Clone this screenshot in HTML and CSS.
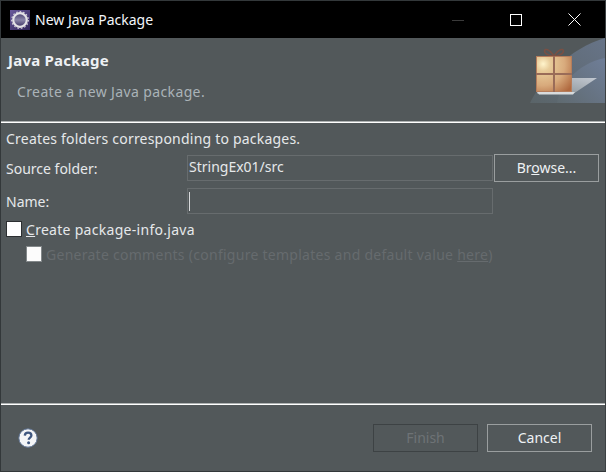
FILE: index.html
```html
<!DOCTYPE html>
<html lang="en">
<head>
<meta charset="utf-8">
<title>New Java Package</title>
<link rel="stylesheet" href="styles.css">
</head>
<body>
<div class="window">
  <header class="titlebar">
    <svg class="app-icon" viewBox="0 0 20 20" width="20" height="20" aria-hidden="true">
      <defs>
        <linearGradient id="appbg" x1="0" y1="0" x2="1" y2="1"><stop offset="0" stop-color="#6a5a9c"/><stop offset="1" stop-color="#2f2358"/></linearGradient>
        <linearGradient id="appcore" x1="0" y1="0" x2="0" y2="1"><stop offset="0" stop-color="#4a4170"/><stop offset="0.5" stop-color="#8a85a8"/><stop offset="1" stop-color="#3a3060"/></linearGradient>
      </defs>
      <rect width="20" height="20" fill="url(#appbg)"/>
      <circle cx="10" cy="10" r="6.800" fill="url(#appcore)" stroke="#e4e2e6" stroke-width="2.200"/>
      <circle cx="10" cy="10" r="8.300" fill="none" stroke="#d8d6dc" stroke-width="1.200" stroke-dasharray="1.600 1.900"/>
    </svg>
    <span class="title-text">New Java Package</span>
    <div class="win-controls">
      <span class="win-btn"><svg width="12" height="12" viewBox="0 0 12 12"><path d="M0 6.5h12" stroke="#3a3a3a" fill="none"/></svg></span>
      <span class="win-btn"><svg width="12" height="12" viewBox="0 0 12 12"><rect x=".5" y=".5" width="11" height="11" stroke="#fff" fill="none"/></svg></span>
      <span class="win-btn"><svg width="13" height="13" viewBox="0 0 13 13"><path d="M.5.5l12 12M12.500.5l-12 12" stroke="#fff" fill="none"/></svg></span>
    </div>
  </header>

  <section class="banner">
    <div class="banner-text">
      <h1 class="banner-title">Java Package</h1>
      <p class="banner-sub">Create a new Java package.</p>
    </div>
    <svg class="banner-art" viewBox="0 0 76 66" width="76" height="66" aria-hidden="true">
      <defs>
        <radialGradient id="box" cx="0.2" cy="0.22" r="1"><stop offset="0" stop-color="#fff4cc"/><stop offset="0.2" stop-color="#e8cc9a"/><stop offset="0.6" stop-color="#d8aa7c"/><stop offset="1" stop-color="#b0693f"/></radialGradient>
        <linearGradient id="swoosh" x1="0" y1="1" x2="1" y2="0"><stop offset="0" stop-color="#5a6468"/><stop offset="1" stop-color="#677488"/></linearGradient>
        <linearGradient id="band" x1="0" y1="1" x2="1" y2="0"><stop offset="0" stop-color="#5f6a70"/><stop offset="1" stop-color="#6f7e98"/></linearGradient>
        <linearGradient id="floor" x1="0" y1="1" x2="1" y2="0"><stop offset="0" stop-color="#80898d"/><stop offset="1" stop-color="#c3c9d2"/></linearGradient>
      </defs>
      <path d="M1 65C12 42 40 10 76 0V65Z" fill="url(#swoosh)"/>
      <path d="M28 65C30 50 46 26 76 20V65Z" fill="url(#band)"/>
      <path d="M8 40H68L44 56H8Z" fill="url(#floor)"/>
      <path d="M8 54H46L44 56.500H10Z" fill="#d8dbdd"/>
      <path d="M25 18C20 11 16 10 15.500 13C15.500 16 21 18 25 18C29 18 34.500 16 34.500 13C34 10 30 11 25 18Z" fill="none" stroke="#7a5044" stroke-width="1.500"/>
      <rect x="7" y="18" width="36" height="36" fill="url(#box)"/>
      <rect x="7.500" y="18.500" width="35" height="35" fill="none" stroke="#b57d5c"/>
      <path d="M25 18V54M7 36H43" stroke="#9a6c58" stroke-width="2" fill="none"/>
    </svg>
  </section>
  <hr class="rule">

  <main class="content">
    <p class="intro">Creates folders corresponding to packages.</p>
    <div class="form-grid">
      <label class="field-label">Source folder:</label>
      <div class="field field-value">StringEx01/src</div>
      <button class="btn browse" type="button">Br<u>o</u>wse...</button>
      <label class="field-label name-label">Name:</label>
      <div class="field"><span class="caret"></span></div>
    </div>
    <div class="check-row">
      <span class="checkbox"></span>
      <span class="check-text"><u>C</u>reate package-info.java</span>
    </div>
    <div class="check-row sub disabled">
      <span class="checkbox no-border"></span>
      <span class="check-text">Generate comments (configure templates and default value <u>here</u>)</span>
    </div>
  </main>

  <hr class="rule">
  <footer class="footer">
    <svg class="help" viewBox="0 0 20 20" width="20" height="20" aria-hidden="true">
      <circle cx="10" cy="10" r="9.200" fill="#f4f5f7" stroke="#5e7394" stroke-width="1"/>
      <path d="M6.800 7.600C6.900 5.600 8.300 4.600 10.100 4.600C12 4.600 13.400 5.700 13.400 7.400C13.400 9.500 10.700 9.800 10.700 11.800" fill="none" stroke="#3f5780" stroke-width="2.300"/>
      <circle cx="10.600" cy="14.800" r="1.500" fill="#3f5780"/>
    </svg>
    <button class="btn btn-disabled" type="button" disabled>Finish</button>
    <button class="btn" type="button">Cancel</button>
  </footer>
</div>
</body>
</html>
```

FILE: styles.css
```css
* { box-sizing: border-box; }
html, body { margin: 0; padding: 0; }
body { width: 606px; height: 472px; overflow: hidden; background: #52585a; }
.window {
  width: 606px; height: 472px;
  display: flex; flex-direction: column;
  background: #52585a;
  border: 1px solid #33383a;
  border-right-color: #3c4143;
  font-family: "Noto Sans", "Open Sans", sans-serif;
  font-size: 14px;
  color: #e6e8ea;
}
.titlebar {
  height: 37px; flex: none;
  display: flex; align-items: center;
  background: #000; color: #f2f6fa;
  padding-left: 9px;
}
.app-icon { flex: none; margin-right: 5px; }
.title-text { font-size: 14px; line-height: 20px; }
.win-controls { margin-left: auto; display: flex; padding-right: 2px; }
.win-btn { width: 58px; height: 36px; display: flex; align-items: center; justify-content: center; }
.banner { height: 83px; flex: none; display: flex; justify-content: space-between; padding-left: 7px; }
.banner-title { margin: 12px 0 0; font-size: 15px; line-height: 20px; font-weight: 700; color: #eef1f4; letter-spacing: 0.22px; }
.banner-sub { margin: 12px 0 0 9px; font-size: 14px; line-height: 20px; color: #aab3b8; letter-spacing: 0.38px; }
.banner-art { flex: none; }
.rule { flex: none; margin: 0; border: 0; height: 2px; background: linear-gradient(#aeb2b2 50%, #fff 50%); }
.content { flex: 1; padding: 6px 5px 0; }
.intro { margin: 0 0 6px; line-height: 20px; letter-spacing: 0.21px; }
.form-grid { display: grid; grid-template-columns: 181px 306px 105px; grid-auto-rows: 26px; row-gap: 7px; align-items: center; }
.field-label { line-height: 20px; padding-top: 2px; }
.name-label { grid-column: 1; }
.field { height: 26px; border: 1px solid #676c6e; padding: 0 1px; display: flex; align-items: center; }
.field-value { padding-bottom: 3px; }
.caret { width: 1px; height: 19px; background: #d8dadc; }
.btn {
  width: 105px; height: 28px;
  font: inherit; color: #eef1f4;
  background: #52585a; border: 1px solid #9a9e9f;
  padding: 0; line-height: 20px;
}
.browse { margin-left: 1px; width: 105px; }
.check-row { display: flex; align-items: center; gap: 4px; height: 20px; margin-top: 5px; }
.check-row.sub { margin-top: 5px; padding-left: 20px; }
.check-row .check-text { letter-spacing: 0.29px; }
.check-row.sub .check-text { letter-spacing: 0.27px; }
.check-row.disabled { color: #666b6e; }
.checkbox { width: 16px; height: 16px; background: #fff; border: 1px solid #2c2f31; flex: none; }
.checkbox.no-border { background: #fcfcfc; border-color: #83888a; }
.footer { height: 66px; flex: none; display: flex; align-items: flex-start; padding: 19px 13px 0 17px; gap: 9px; }
.help { margin-top: 4px; margin-right: auto; }
.btn-disabled { color: #6e7376; border-color: #3d4244; }
```
